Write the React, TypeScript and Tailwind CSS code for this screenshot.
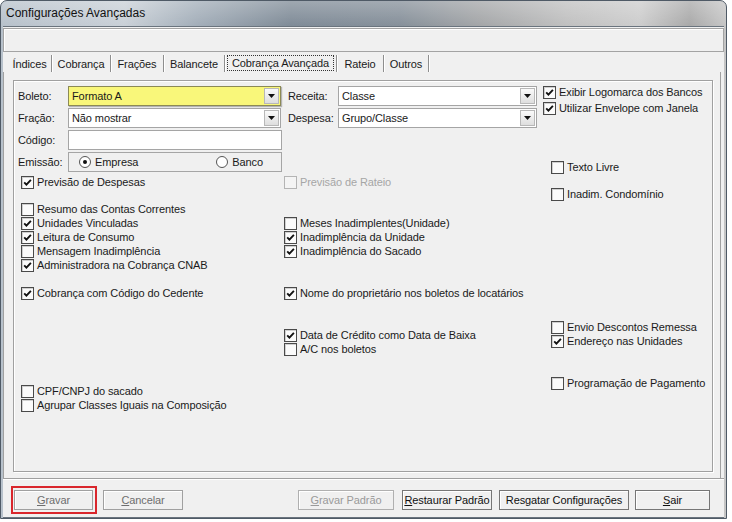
import React from 'react';

type CheckProps = { label: string; checked?: boolean; disabled?: boolean; className?: string };

const CheckBox: React.FC<CheckProps> = ({ label, checked, disabled, className }) => (
  <div className={`h-[14px] flex items-center gap-[3px] whitespace-nowrap ${className ?? ''}`}>
    <span
      className={`w-[13px] h-[13px] border flex items-center justify-center shrink-0 ${
        disabled ? 'border-[#b4b4b4] bg-[#f4f4f4]' : 'border-[#4a4a4a] bg-[#fbfbfb] shadow-[inset_1px_1px_0_#d0d0d0]'
      }`}
    >
      {checked && (
        <svg width="9" height="9" viewBox="0 0 9 9">
          <path d="M1.2 4.4L3.4 6.6L7.9 1.9" fill="none" stroke="#111" strokeWidth="1.9" />
        </svg>
      )}
    </span>
    <span className={disabled ? 'text-[#a6a6a6]' : 'text-[#1a1a1a]'}>{label}</span>
  </div>
);

const Combo: React.FC<{ value: string; width: string; yellow?: boolean }> = ({ value, width, yellow }) => (
  <div
    className={`${width} h-[20px] flex items-center border ${
      yellow ? 'bg-[#f9f77a] border-[#8c8a55] shadow-[1px_1px_1px_rgba(0,0,0,0.25)]' : 'bg-white border-[#a5a5a5]'
    }`}
  >
    <span className="flex-1 pl-[3px] text-[#1a1a1a]">{value}</span>
    <span className="w-[15px] h-[16px] mr-[1px] border border-[#b8b8b8] bg-gradient-to-b from-[#fafafa] to-[#dedede] flex items-center justify-center">
      <svg width="7" height="4" viewBox="0 0 7 4">
        <path d="M0 0H7L3.5 4Z" fill="#111" />
      </svg>
    </span>
  </div>
);

const Radio: React.FC<{ label: string; checked?: boolean }> = ({ label, checked }) => (
  <div className="flex items-center gap-[4px]">
    <span className="w-[12px] h-[12px] rounded-full border border-[#555] bg-white flex items-center justify-center">
      {checked && <span className="w-[4px] h-[4px] rounded-full bg-[#111]" />}
    </span>
    <span>{label}</span>
  </div>
);

const FormRow: React.FC<{ label: string; children: React.ReactNode; className?: string }> = ({ label, children, className }) => (
  <div className={`flex items-center h-[20px] ${className ?? ''}`}>
    <span className="w-[54px] pl-[4px] shrink-0">{label}</span>
    {children}
  </div>
);

const tabs = [
  { label: 'Índices', w: 'w-[44px]' },
  { label: 'Cobrança', w: 'w-[59px]' },
  { label: 'Frações', w: 'w-[53px]' },
  { label: 'Balancete', w: 'w-[61px]' },
  { label: 'Cobrança Avançada', w: 'w-[112px]', active: true },
  { label: 'Rateio', w: 'w-[47px]' },
  { label: 'Outros', w: 'w-[45px]' },
];

const Btn: React.FC<{ children: React.ReactNode; className: string; disabled?: boolean; light?: boolean }> = ({
  children,
  className,
  disabled,
  light,
}) => (
  <div
    className={`h-[20px] flex items-center justify-center border bg-[#f0f0f0] shadow-[inset_1px_1px_0_#fff] ${className} ${
      disabled ? (light ? 'border-[#b0b0b0] text-[#9a9a9a]' : 'border-[#a0a0a0] text-[#6e6e6e]') : 'border-[#767676] text-[#111]'
    }`}
  >
    {children}
  </div>
);

export default function App() {
  return (
    <div className="w-[732px] h-[522px] bg-white overflow-hidden font-['Liberation_Sans',Arial,sans-serif] text-[11px] leading-[14px] tracking-[-0.1px] text-[#1a1a1a]">
      <div className="w-[727px] h-[519px] flex flex-col rounded-t-[7px] border border-[#4f5a66] bg-[linear-gradient(90deg,#b7c1cb_0%,#c9d0d7_17%,#a3aeb9_27%,#7f8b97_40%,#86909a_55%,#a4a6a8_66%,#c0c0c0_78%,#cdcdcd_88%,#a9a9a9_95%,#c6c6c6_100%)]">
        {/* title bar */}
        <div className="h-[25px] flex items-center pl-[5px] pb-[1px] text-[12px] tracking-normal text-[#111] bg-gradient-to-b from-white/25 to-transparent rounded-t-[6px]">
          Configurações Avançadas
        </div>

        {/* client */}
        <div className="ml-[2px] w-[721px] h-[492px] flex flex-col bg-[#f0f0f0] border-t border-b border-[#6a747e]">
          {/* empty top panel */}
          <div className="mt-[1px] h-[24px] border border-[#a3a3a3] shadow-[inset_1px_1px_0_#fff]" />

          {/* tabs */}
          <div className="mt-[3px] h-[17px] flex pl-[5px]">
            {tabs.map((t) => (
              <div
                key={t.label}
                className={`${t.w} h-[17px] flex items-center justify-center border-r border-[#8e8e8e] shadow-[1px_0_0_#fff]`}
              >
                {t.active ? (
                  <span className="h-[16px] -mt-[2px] px-[4px] flex items-center border border-dotted border-[#333]">{t.label}</span>
                ) : (
                  <span>{t.label}</span>
                )}
              </div>
            ))}
          </div>

          {/* page */}
          <div className="h-[406px] mr-[3px] border-l border-r border-[#a0a0a0]">
            <div className="ml-[9px] mt-[8px] w-[700px] h-[392px] border border-[#a0a0a0] shadow-[inset_1px_1px_0_#fff,1px_1px_0_#fff] flex">
              {/* column 1 */}
              <div className="w-[270px] flex flex-col pt-[5px]">
                <FormRow label="Boleto:">
                  <Combo value="Formato A" width="w-[213px]" yellow />
                </FormRow>
                <FormRow label="Fração:" className="mt-[2px]">
                  <Combo value="Não mostrar" width="w-[213px]" />
                </FormRow>
                <FormRow label="Código:" className="mt-[2px]">
                  <div className="w-[214px] h-[20px] bg-white border border-[#a5a5a5]" />
                </FormRow>
                <FormRow label="Emissão:" className="mt-[2px]">
                  <div className="w-[214px] h-[20px] border border-[#a5a5a5] flex items-center pl-[10px]">
                    <Radio label="Empresa" checked />
                    <div className="ml-[78px]">
                      <Radio label="Banco" />
                    </div>
                  </div>
                </FormRow>
                <div className="pl-[7px] flex flex-col">
                  <CheckBox label="Previsão de Despesas" checked className="mt-[3px]" />
                  <CheckBox label="Resumo das Contas Correntes" className="mt-[13px]" />
                  <CheckBox label="Unidades Vinculadas" checked />
                  <CheckBox label="Leitura de Consumo" checked />
                  <CheckBox label="Mensagem Inadimplência" />
                  <CheckBox label="Administradora na Cobrança CNAB" checked />
                  <CheckBox label="Cobrança com Código do Cedente" checked className="mt-[14px]" />
                  <CheckBox label="CPF/CNPJ do sacado" className="mt-[84px]" />
                  <CheckBox label="Agrupar Classes Iguais na Composição" />
                </div>
              </div>

              {/* column 2 */}
              <div className="w-[259px] flex flex-col pt-[5px]">
                <FormRow label="Receita:">
                  <Combo value="Classe" width="w-[199px]" />
                </FormRow>
                <FormRow label="Despesa:" className="mt-[2px]">
                  <Combo value="Grupo/Classe" width="w-[199px]" />
                </FormRow>
                <CheckBox label="Previsão de Rateio" disabled className="mt-[47px]" />
                <CheckBox label="Meses Inadimplentes(Unidade)" className="mt-[27px]" />
                <CheckBox label="Inadimplência da Unidade" checked />
                <CheckBox label="Inadimplência do Sacado" checked />
                <CheckBox label="Nome do proprietário nos boletos de locatários" checked className="mt-[28px]" />
                <CheckBox label="Data de Crédito como Data de Baixa" checked className="mt-[28px]" />
                <CheckBox label="A/C nos boletos" />
              </div>

              {/* column 3 */}
              <div className="flex flex-col pt-[4px]">
                <CheckBox label="Exibir Logomarca dos Bancos" checked />
                <CheckBox label="Utilizar Envelope com Janela" checked className="mt-[2px]" />
                <div className="pl-[8px] flex flex-col">
                  <CheckBox label="Texto Livre" className="mt-[45px]" />
                  <CheckBox label="Inadim. Condomínio" className="mt-[13px]" />
                  <CheckBox label="Envio Descontos Remessa" className="mt-[119px]" />
                  <CheckBox label="Endereço nas Unidades" checked />
                  <CheckBox label="Programação de Pagamento" className="mt-[28px]" />
                </div>
              </div>
            </div>
          </div>

          {/* bottom buttons */}
          <div className="h-[39px] border-t border-[#a0a0a0] shadow-[inset_0_1px_0_#fff] flex items-start pt-[11px]">
            <div className="relative ml-[11px]">
              <Btn className="w-[79px]" disabled>
                <span><u>G</u>ravar</span>
              </Btn>
              <div className="absolute -left-[3px] -top-[4px] w-[86px] h-[28px] border-2 border-[#d9262c]" />
            </div>
            <Btn className="ml-[10px] w-[80px]" disabled>
              <span><u>C</u>ancelar</span>
            </Btn>
            <Btn className="ml-[115px] w-[96px]" disabled light>
              <span><u>G</u>ravar Padrão</span>
            </Btn>
            <Btn className="ml-[8px] w-[90px]">
              <span><u>R</u>estaurar Padrão</span>
            </Btn>
            <Btn className="ml-[7px] w-[130px]">
              <span>Resgatar Configurações</span>
            </Btn>
            <Btn className="ml-[6px] w-[75px]">
              <span><u>S</u>air</span>
            </Btn>
          </div>
        </div>
      </div>
    </div>
  );
}
